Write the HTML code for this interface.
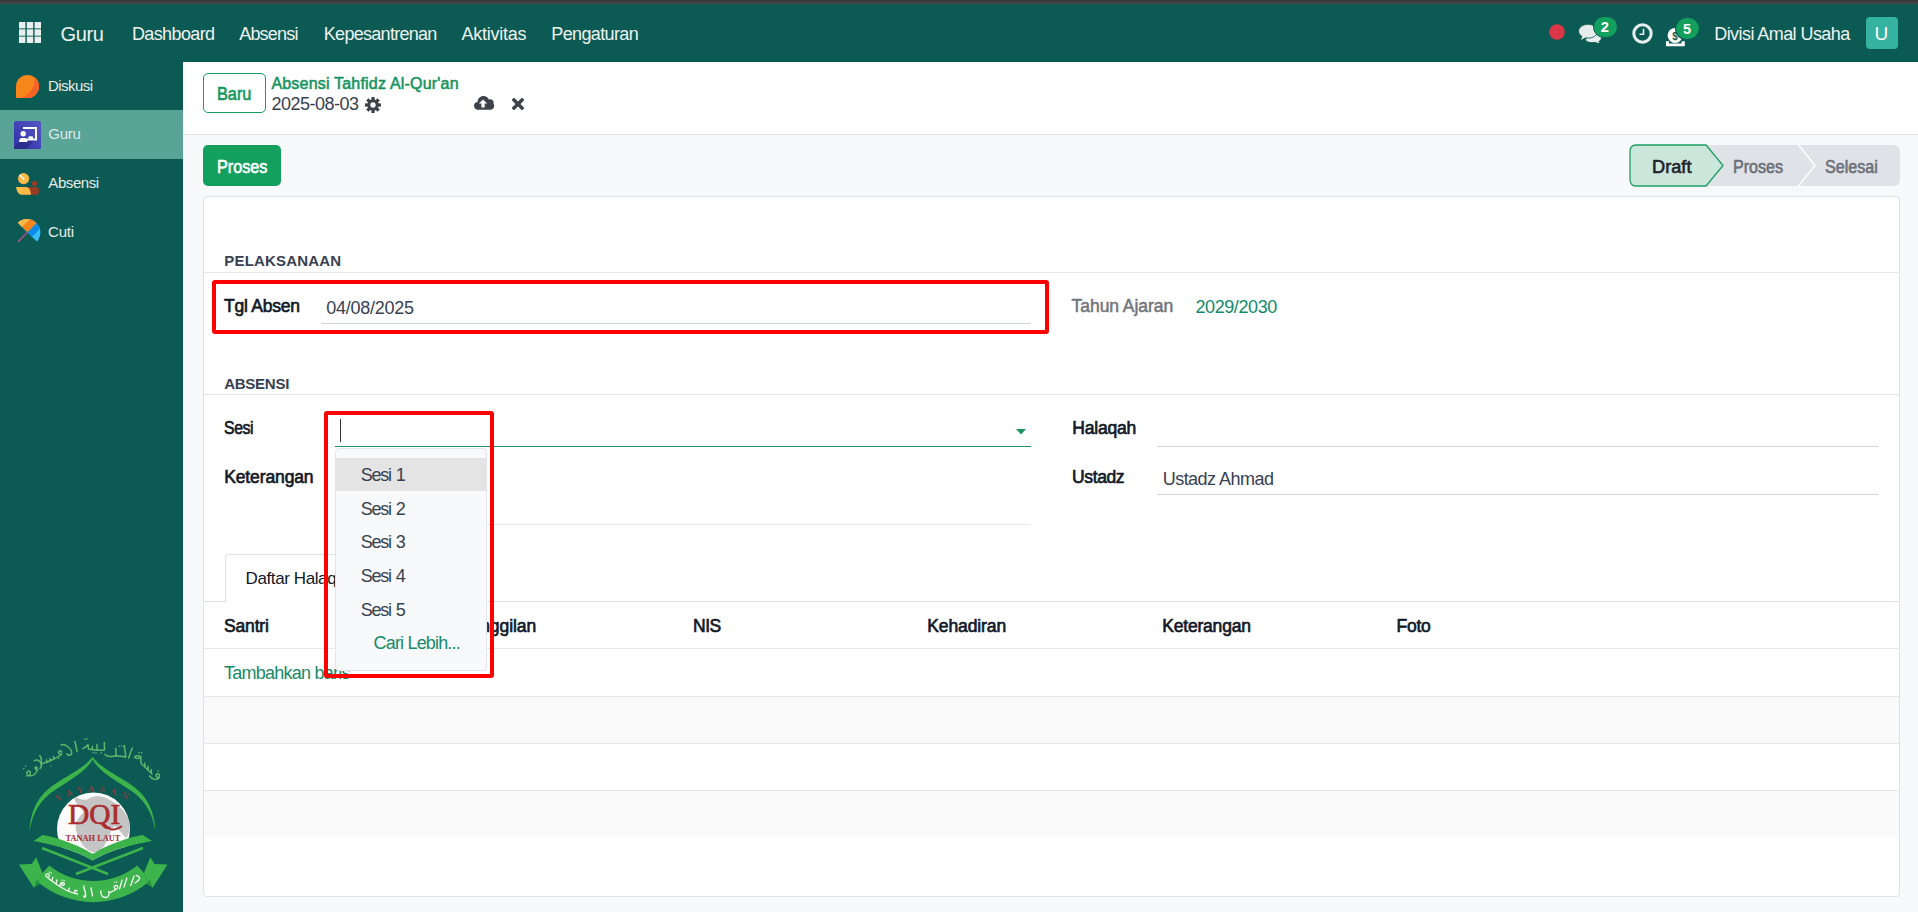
<!DOCTYPE html>
<html><head><meta charset="utf-8">
<style>
*{box-sizing:border-box;margin:0;padding:0}
html,body{width:1918px;height:912px;overflow:hidden;background:#f8f9fa;font-family:"Liberation Sans",sans-serif;position:relative}
.a{position:absolute}
.t{position:absolute;white-space:nowrap;line-height:1}
.b{font-weight:bold}
#strip{left:0;top:0;width:1918px;height:4px;background:linear-gradient(#3b3b3b 0,#3b3b3b 2px,#474646 2px,#474646 4px)}
#nav{left:0;top:4px;width:1918px;height:58px;background:#0c5a54}
#side{left:0;top:62px;width:183px;height:850px;background:#0c5a54}
#act{left:0;top:110px;width:183px;height:49px;background:#5aa397}
.nv{color:#eef2f1;font-size:18px}
.sd{color:#e6ecea;font-size:15px}
#cp{left:183px;top:62px;width:1735px;height:73px;background:#fff;border-bottom:1px solid #dee2e6}
#sheet{left:203px;top:196px;width:1697px;height:701px;background:#fff;border:1px solid #dee2e6;border-radius:4px}
.hl{background:#e5e7eb;height:1px}
.ul{background:#d1d5db;height:1px}
.lbl{color:#111827;font-size:17.5px;-webkit-text-stroke:0.65px #111827}
.val{color:#374151;font-size:18px}
.red{border:4px solid #ff0000;border-radius:3px}
</style></head><body>
<div id="strip" class="a"></div>
<div id="nav" class="a"></div>
<div id="side" class="a"></div>
<div id="act" class="a"></div>
<div id="cp" class="a"></div>

<!-- navbar -->
<svg class="a" style="left:19px;top:22px" width="22" height="21" viewBox="0 0 22 21">
<g fill="#e9efee"><rect x="0" y="0" width="6.4" height="6.4"/><rect x="7.8" y="0" width="6.4" height="6.4"/><rect x="15.6" y="0" width="6.4" height="6.4"/><rect x="0" y="7.3" width="6.4" height="6.4"/><rect x="7.8" y="7.3" width="6.4" height="6.4"/><rect x="15.6" y="7.3" width="6.4" height="6.4"/><rect x="0" y="14.6" width="6.4" height="6.4"/><rect x="7.8" y="14.6" width="6.4" height="6.4"/><rect x="15.6" y="14.6" width="6.4" height="6.4"/></g></svg>
<div class="t nv" style="left:60.6px;top:23.7px;font-size:20px;letter-spacing:-0.37px">Guru</div>
<div class="t nv" style="left:132px;top:24.8px;letter-spacing:-0.63px">Dashboard</div>
<div class="t nv" style="left:239.2px;top:24.8px;letter-spacing:-0.8px">Absensi</div>
<div class="t nv" style="left:323.8px;top:24.8px;letter-spacing:-0.71px">Kepesantrenan</div>
<div class="t nv" style="left:461.5px;top:24.8px;letter-spacing:-0.24px">Aktivitas</div>
<div class="t nv" style="left:551.3px;top:24.8px;letter-spacing:-0.63px">Pengaturan</div>
<div class="t nv" style="left:1714.2px;top:24.5px;letter-spacing:-0.56px">Divisi Amal Usaha</div>

<!-- sidebar -->
<div class="t sd" style="left:48px;top:78.3px;letter-spacing:-0.56px">Diskusi</div>
<div class="t sd" style="left:48.3px;top:125.8px;letter-spacing:-0.26px;color:#dfe9e6">Guru</div>
<div class="t sd" style="left:48.3px;top:175.3px;letter-spacing:-0.42px">Absensi</div>
<div class="t sd" style="left:48px;top:224.3px;letter-spacing:-0.17px">Cuti</div>


<!-- sidebar icons -->
<svg class="a" style="left:16px;top:75px" width="23" height="23" viewBox="0 0 23 23">
<defs><clipPath id="dk"><path d="M0,23 V11.5 A11.5,11.5 0 1 1 11.5,23 Z"/></clipPath></defs>
<g clip-path="url(#dk)"><rect width="23" height="23" fill="#f7871b"/>
<path d="M18.5,2 Q20,17 4,23.5 L24,24 L24,0 Z" fill="#f76228"/></g>
</svg>
<svg class="a" style="left:14px;top:121px" width="27" height="28" viewBox="0 0 27 28">
<defs><linearGradient id="gg" x1="0" y1="1" x2="1" y2="0"><stop offset="0" stop-color="#3230a8"/><stop offset="1" stop-color="#5359c4"/></linearGradient>
<clipPath id="gc"><rect width="27" height="28" rx="1.5"/></clipPath></defs>
<g clip-path="url(#gc)">
<rect width="27" height="28" fill="url(#gg)"/>
<path d="M4,22 L9,17 L22,17.5 L12,28 L0,28 L0,26 Z" fill="#2a2a86" opacity="0.75"/>
<path d="M9,7 H22 V18.5 H12" fill="none" stroke="#fff" stroke-width="1.9"/>
<rect x="14.5" y="15.3" width="4.5" height="3" rx="1" fill="#fff"/>
<circle cx="9.2" cy="12.8" r="2.7" fill="#fff"/>
<path d="M5,21 Q5,17 8,17 H10.5 Q13.5,17 13.5,21 Z" fill="#fff"/>
</g></svg>
<svg class="a" style="left:15px;top:172px" width="25" height="24" viewBox="0 0 25 24">
<circle cx="8.6" cy="6.6" r="5.6" fill="#fbb945"/>
<path d="M5,3.3 L8.8,7.2" stroke="#fff" stroke-width="1.4" stroke-linecap="round"/>
<circle cx="19.5" cy="11.4" r="2.6" fill="#983d23"/>
<path d="M12,15.1 H21.3 Q24,15.1 24,18.9 Q24,22.8 21.3,22.8 H12 Z" fill="#983d23"/>
<path d="M1,15.1 H11.5 Q15.5,15.5 16,22.8 H6 Q2,22 1,15.1 Z" fill="#fbb945"/>
</svg>
<svg class="a" style="left:14px;top:216px" width="30" height="30" viewBox="0 0 30 30">
<defs><clipPath id="um"><path d="M3.9,6.7 L22.8,25.4 A13.3,13.3 0 0 0 3.9,6.7 Z"/></clipPath></defs>
<g clip-path="url(#um)" transform="translate(0,0)">
<g transform="rotate(-45 13.4 16.3)">
<rect x="-20" y="-10" width="70" height="50" fill="#35bdfc"/>
<rect x="-20" y="-10" width="70" height="32.7" fill="#0a8cef"/>
<rect x="-20" y="-10" width="70" height="26.3" fill="#f7871b"/>
<rect x="-20" y="-10" width="70" height="18.7" fill="#fbb945"/>
</g></g>
<path d="M13.4,16.3 L4.5,25.4" stroke="#a4508e" stroke-width="1.6" stroke-linecap="round"/>
</svg>

<!-- navbar right icons -->
<svg class="a" style="left:1549px;top:23.5px" width="16" height="16" viewBox="0 0 16 16"><circle cx="8" cy="8" r="7.8" fill="#dc3545"/></svg>
<svg class="a" style="left:1576.5px;top:22.6px" width="27.5" height="22.2" viewBox="0 0 26 21">
<path d="M12,10 C20,8 24,11 23.5,14 C23,16.5 21.5,17 21,17.5 L23,20 L16.5,18.5 C13,19 9,18 7.5,16 Z" fill="#e6eceb" stroke="#0c5a54" stroke-width="1"/>
<path d="M10.5,1.3 C15.5,1.3 19.5,4.2 19.5,7.8 C19.5,11.4 15.5,14.3 10.5,14.3 C9.6,14.3 8.8,14.2 8,14.1 L3,16.8 L4.6,12.6 C2.6,11.4 1.5,9.7 1.5,7.8 C1.5,4.2 5.5,1.3 10.5,1.3 Z" fill="#e6eceb" stroke="#0c5a54" stroke-width="0.8"/>
</svg>
<svg class="a" style="left:1593px;top:16px" width="25" height="22" viewBox="0 0 25 22"><rect x="0.5" y="0.5" width="24" height="21" rx="10.5" fill="#13a05f" stroke="#0c5a54" stroke-width="1"/></svg>
<div class="t b" style="left:1600.8px;top:19.6px;font-size:14.6px;color:#fff">2</div>
<svg class="a" style="left:1632px;top:22.5px" width="21" height="21" viewBox="0 0 21 21">
<circle cx="10.5" cy="10.5" r="8.7" fill="none" stroke="#e8eeed" stroke-width="3"/>
<path d="M11.5,5.8 V11.3 H7.5" fill="none" stroke="#e8eeed" stroke-width="1.6"/>
</svg>
<svg class="a" style="left:1665px;top:27px" width="22" height="20" viewBox="0 0 22 20">
<circle cx="10.1" cy="8.4" r="7.5" fill="#fff"/>
<text x="10.1" y="12.6" text-anchor="middle" font-family="Liberation Sans" font-size="10" font-weight="bold" fill="#0c5a54">$</text>
<path d="M1,14.2 H4 V16.4 H16.6 V14.2 H19.8 V19.3 H1 Z" fill="#fff"/>
</svg>
<svg class="a" style="left:1675px;top:17px" width="25" height="24" viewBox="0 0 25 24"><rect x="0.5" y="0.5" width="24" height="22" rx="11" fill="#13a05f" stroke="#0c5a54" stroke-width="1.2"/></svg>
<div class="t b" style="left:1682.9px;top:21.8px;font-size:14.4px;color:#fff">5</div>
<div class="a" style="left:1866px;top:17px;width:32px;height:32px;background:#35b3a0;border-radius:4px"></div>
<div class="t" style="left:1874.5px;top:23.5px;font-size:19px;color:#fff">U</div>

<!-- control panel icons -->
<svg class="a" style="left:365px;top:97px" width="16" height="16" viewBox="-8 -8 16 16">
<g fill="#3d434b">
<rect x="-1.6" y="-8" width="3.2" height="16"/>
<rect x="-1.6" y="-8" width="3.2" height="16" transform="rotate(45)"/>
<rect x="-1.6" y="-8" width="3.2" height="16" transform="rotate(90)"/>
<rect x="-1.6" y="-8" width="3.2" height="16" transform="rotate(135)"/>
<circle r="5.8"/></g>
<circle r="2.7" fill="#fff"/>
</svg>
<svg class="a" style="left:473px;top:95px" width="22" height="16" viewBox="0 0 22 16">
<path d="M5,14.7 C2.3,14.7 1,12.7 1,10.7 C1,8.5 2.7,7 4.6,7 C4.6,3.5 7.3,1 10.5,1 C13,1 15,2.5 15.8,4.5 C16.2,4.3 16.8,4.2 17.3,4.2 C19.2,4.2 20.6,5.8 20.6,7.6 C20.6,7.9 20.5,8.2 20.5,8.5 C21,9.3 21.2,10.2 21.2,11 C21.2,13 19.6,14.7 17.4,14.7 Z" fill="#3d434b"/>
<path d="M10,4.4 L14.2,8.6 H11.7 V12.6 H8.4 V8.6 H5.9 Z" fill="#fff"/>
</svg>
<svg class="a" style="left:512px;top:98px" width="12" height="12" viewBox="0 0 12 12">
<path d="M0.8,0.8 L11.2,11.2 M11.2,0.8 L0.8,11.2" stroke="#3d434b" stroke-width="3.5" stroke-linecap="butt"/>
</svg>


<!-- logo -->
<svg class="a" style="left:0;top:720px" width="183" height="192" viewBox="0 720 183 192">
<g fill="none" stroke="#5cb96b" stroke-width="1.5" stroke-linecap="round" stroke-linejoin="round">
<path d="M27,776 C26,772 28,770 30,771.5 C31,773.5 30,775.5 27,776 M29,775.5 C32,776.5 35,774.5 37,771 C38,769 37,766.5 35.5,767 C34.5,768 35.5,770 37.5,770"/>
<path d="M34.5,760.8 C36.5,759.2 38.5,760 40.3,762 C41.8,764.5 41.5,767 40,768.5 M39.9,755.7 C41.5,758 41.8,760 41.2,762"/>
<path d="M41,764 C46,762.5 50,761 53,759.5 C56,758 58.5,756.5 61.5,754.5 M47,762.5 L46.5,760 M50.5,761 L50,758.5 M54,759 L53.5,756.5"/>
<path d="M61.5,754.5 C58.5,754 57.5,752 59.5,751 C61,750.5 62,751.5 61.5,752.5"/>
<path d="M61,745 C63,744 65.5,745 67.5,746.5 C70.5,748.5 72.5,752 71.5,754 C70,756 67,755.5 67,753.5 M75,741.5 L77,751.5"/>
<path d="M83,748.8 C85,747.5 87,746.5 88,744.5 L88.5,749 C93,750 99,750.5 104.5,750 M92.5,749.5 L92.3,746.5 M97,750.2 L97,744.5 M104.5,750 L104.3,742.5"/>
<path d="M105,754.5 C107,756.8 110,756.8 113,756.2 C117,755.6 121,756 125.8,756.9 M115.8,748.6 L116,755.7 M124.3,745.6 L125.8,756.9 M132.3,748 L128.6,758"/>
<path d="M134.5,757 C136,755.3 139,755.3 140.8,756.6 C139.7,758.7 136.5,759.2 134.5,757 M140.8,756.6 C141,759 140.5,762 141.5,764 C144.5,766.5 148,770 152,774 M145,766.5 L144.6,763.2 M148.3,769.2 L148.1,766.2 M151.3,772.6 L151.2,769.6"/>
<path d="M149.5,776 C152,779 156,780.5 158.5,778.5 C160.5,776.5 159.5,773.5 157.2,773.8 C155.5,774.3 155.8,777 158.5,778.5"/>
</g>
<g fill="#5cb96b"><circle cx="23.8" cy="768.6" r="0.8"/><circle cx="25.6" cy="766.2" r="0.8"/><circle cx="84.8" cy="739.3" r="0.8"/><circle cx="86.8" cy="738.9" r="0.8"/>
<circle cx="93.3" cy="752.8" r="0.8"/><circle cx="96" cy="752.9" r="0.8"/><circle cx="101" cy="753.1" r="0.8"/><circle cx="58.8" cy="758.4" r="0.8"/>
<circle cx="119.3" cy="746.2" r="0.8"/><circle cx="121.7" cy="746" r="0.8"/><circle cx="124" cy="746.3" r="0.8"/><circle cx="139" cy="752.6" r="0.8"/><circle cx="141.6" cy="752.9" r="0.8"/><circle cx="158.2" cy="771" r="0.8"/><circle cx="51" cy="766" r="0.7"/></g>
<path d="M92.4,757 C86,766 74,772 58,782 C42,792 31,805 29.5,831 C33,812 40,800 55,790 C72,779 86,771 92.6,759.5 C99,771 113,779 130,790 C145,800 152,812 155.5,831 C154,805 143,792 127,782 C111,772 99,766 92.6,757 Z" fill="#3cb44b"/>
<defs><clipPath id="globe"><circle cx="93.5" cy="829" r="36.5"/></clipPath><clipPath id="gtop"><path d="M0,720 H183 V841 L152,841 C130,845 105,852 92.7,860.5 C80,852 55,845 33.4,841 L0,841 Z"/></clipPath>
<path id="yarc" d="M54,804 A71.6,71.6 0 0 1 134,804"/></defs>
<g clip-path="url(#gtop)"><circle cx="93.5" cy="829" r="36.5" fill="#fbfbfb"/>
<g clip-path="url(#globe)" fill="#c4c4c4">
<path d="M74,796 C80,800 86,801 90,798 C96,795 104,796 110,800 C118,804 124,810 128,818 C131,826 130,834 126,838 C122,834 118,828 114,826 C110,832 108,840 104,846 C100,852 94,854 88,850 C82,846 78,838 76,830 C74,822 80,816 84,812 C80,808 74,802 74,796 Z"/>
<path d="M92,852 C98,856 104,858 110,856 C106,862 96,862 92,852 Z"/>
</g></g>
<text font-family="Liberation Serif" font-size="9" fill="#b03032" letter-spacing="5.2"><textPath href="#yarc" startOffset="4">YAYASAN</textPath></text>
<text x="68" y="824.2" font-family="Liberation Serif" font-size="29" fill="#ab2b2f" stroke="#ab2b2f" stroke-width="0.7" textLength="52.3" lengthAdjust="spacingAndGlyphs">DQI</text>
<path d="M103,823 C108,830 114,832 122,826" fill="none" stroke="#ab2b2f" stroke-width="2"/>
<text x="65.6" y="841" font-family="Liberation Serif" font-size="8.6" font-weight="bold" fill="#ab2b2f" textLength="54.7" lengthAdjust="spacingAndGlyphs">TANAH LAUT</text>
<path d="M42,848 L108,874 M143,848 L76,874" stroke="#3cb44b" stroke-width="2.6"/>
<path d="M33.4,841 L42.6,835 C60,838 80,846 92.7,854 C105,846 125,838 142.8,835 L152,841 C130,845 105,852 92.7,860.5 C80,852 55,845 33.4,841 Z" fill="#3cb44b"/>
<path d="M18.9,864.4 L31.8,864.1 L36.1,857.2 L42.5,873 L38.5,882.5 L33.8,887.8 Z" fill="#3cb44b"/>
<path d="M36.3,879.8 L40.5,883.2 L34.5,887.2 Z" fill="#23933b"/>
<path d="M167.5,864.4 L154.6,864.1 L150.3,857.2 L143.9,873 L147.9,882.5 L152.6,887.8 Z" fill="#3cb44b"/>
<path d="M150.1,879.8 L145.9,883.2 L151.9,887.2 Z" fill="#23933b"/>
<path d="M49.2,865.4 A69.8,69.8 0 0 0 137.2,865.4 L143.9,873 L147.9,882.5 A85.9,85.9 0 0 1 38.5,882.5 L42.5,873 Z" fill="#3cb44b"/>
<g fill="none" stroke="#f2f8f2" stroke-width="1.35" stroke-linecap="round" stroke-linejoin="round">
<path d="M46,876.5 C45,874.5 47,873 49,874.5 C50,876 49,878 46,876.5 M48,878 C53,882 60,887 66,890 C70,892 74,893.5 77.5,894 C75,893.5 73.5,892 75,890.5 C76,890 77,890.5 76.8,891.2"/>
<path d="M52,880.6 L52.8,877.3 M56,883.5 L57,880 M60,886 L61,882.8 M68.5,891 L69.2,888.2 M63,885.6 C61.3,885.3 61.3,882.6 63,882.5 C64.6,882.6 64.8,885.2 63,885.6"/>
<path d="M83.5,887 C85,890 86,893 85.5,896.5 C85,897.8 83.5,897.5 84,896 M91,888 L92.5,895.8"/>
<path d="M100.8,891 C100.5,895.5 103,897.8 106,897.5 C109,897 109.5,894 108.8,891.5 M108.8,893 C111,892 113.5,891 116,889.5 C113.5,888.5 113.5,885.5 116,885.3 C118,885.3 118.5,888 116,889.5 M119.5,889 L122,880.2 M124,887 L126.8,878.2 M130.6,885.5 L134,876.2 M135,883 C137,882 139,880.5 139.8,878 C138.8,876.5 137.5,875.6 136.2,875.5"/>
</g>
<g fill="#f2f8f2"><circle cx="49.5" cy="872.3" r="0.75"/><circle cx="51.2" cy="873.1" r="0.75"/><circle cx="62" cy="880.2" r="0.7"/><circle cx="64.2" cy="880.6" r="0.7"/><circle cx="84" cy="886" r="0.8"/><circle cx="114.5" cy="882.4" r="0.7"/><circle cx="116.7" cy="882" r="0.7"/></g>
</svg>

<!-- control panel -->
<div class="a" style="left:203px;top:73px;width:63px;height:40px;border:1px solid #16a05f;border-radius:5px;background:#fff"></div>
<div class="t" style="left:217.1px;top:86.2px;font-size:17.5px;-webkit-text-stroke:0.6px #13985c;transform:scaleX(0.93);transform-origin:0 0;color:#13985c">Baru</div>
<div class="t" style="left:271.4px;top:75.9px;font-size:16px;-webkit-text-stroke:0.55px #15945e;letter-spacing:0.2px;color:#15945e">Absensi Tahfidz Al-Qur'an</div>
<div class="t" style="left:271.5px;top:94.5px;font-size:18px;letter-spacing:-0.5px;color:#374151">2025-08-03</div>

<div class="a" style="left:203px;top:145px;width:78px;height:41px;background:#13a05f;border-radius:5px"></div>
<div class="t" style="left:216.6px;top:159.2px;font-size:17.5px;-webkit-text-stroke:0.6px #fff;transform:scaleX(0.925);transform-origin:0 0;color:#fff">Proses</div>

<!-- sheet -->
<div id="sheet" class="a"></div>

<!-- statusbar -->
<svg class="a" style="left:1629px;top:144px" width="272" height="43" viewBox="0 0 272 43">
<path d="M7,1 H264 Q271,1 271,8 V35 Q271,42 264,42 H7 Q1,42 1,35 V8 Q1,1 7,1 Z" fill="#dfe2e6"/>
<path d="M169.5,1 L186,21.5 L169.5,42" fill="none" stroke="#fff" stroke-width="1.6"/>
<path d="M7,1 H77 L94,21.5 L77,42 H7 Q1,42 1,35 V8 Q1,1 7,1 Z" fill="#cbe7dc" stroke="#1f9e63" stroke-width="1.3"/>
</svg>
<div class="t" style="left:1651.9px;top:159.0px;font-size:17.5px;-webkit-text-stroke:0.6px #1f2328;transform:scaleX(1.04);transform-origin:0 0;color:#1f2328">Draft</div>
<div class="t" style="left:1733.4px;top:159.0px;font-size:17.5px;-webkit-text-stroke:0.6px #6b7079;transform:scaleX(0.92);transform-origin:0 0;color:#6b7079">Proses</div>
<div class="t" style="left:1825.4px;top:159.0px;font-size:17.5px;-webkit-text-stroke:0.6px #6b7079;transform:scaleX(0.92);transform-origin:0 0;color:#6b7079">Selesai</div>

<!-- sheet content -->
<div class="t b" style="left:224.3px;top:253.1px;font-size:15px;letter-spacing:0.19px;color:#374151">PELAKSANAAN</div>
<div class="a hl" style="left:204px;top:272px;width:1695px"></div>
<div class="t lbl" style="left:224px;top:298.0px;letter-spacing:-0.24px">Tgl Absen</div>
<div class="t val" style="left:326.3px;top:298.7px;letter-spacing:-0.27px">04/08/2025</div>
<div class="a ul" style="left:321px;top:323px;width:710px"></div>
<div class="t" style="left:1071.6px;top:298.1px;font-size:17.5px;-webkit-text-stroke:0.5px #71757b;letter-spacing:-0.05px;color:#71757b">Tahun Ajaran</div>
<div class="t" style="left:1195.5px;top:297.9px;font-size:18px;letter-spacing:-0.42px;color:#108a6c">2029/2030</div>

<div class="t b" style="left:224.2px;top:376.2px;font-size:15px;letter-spacing:-0.26px;color:#374151">ABSENSI</div>
<div class="a hl" style="left:204px;top:394px;width:1695px"></div>
<div class="t lbl" style="left:224px;top:419.6px;letter-spacing:-0.4px;transform:scaleX(0.9);transform-origin:0 0">Sesi</div>
<div class="a" style="left:335px;top:446px;width:696px;height:1px;background:#1e9561"></div>
<div class="a" style="left:340px;top:419px;width:1px;height:23px;background:#333"></div>
<svg class="a" style="left:1016px;top:429px" width="10" height="6" viewBox="0 0 10 6"><path d="M0,0 H10 L5,5.5 Z" fill="#1e9561"/></svg>
<div class="t lbl" style="left:1072.3px;top:419.8px;letter-spacing:-0.22px">Halaqah</div>
<div class="a ul" style="left:1157px;top:446px;width:722px"></div>
<div class="t lbl" style="left:224.2px;top:468.8px;letter-spacing:-0.12px">Keterangan</div>
<div class="a hl" style="left:335px;top:524px;width:696px"></div>
<div class="t lbl" style="left:1072px;top:468.8px;letter-spacing:-0.37px">Ustadz</div>
<div class="t val" style="left:1162.7px;top:469.7px;letter-spacing:-0.53px">Ustadz Ahmad</div>
<div class="a ul" style="left:1157px;top:494px;width:722px"></div>

<!-- tabs -->
<div class="a" style="left:225px;top:554px;width:170px;height:48px;background:#fff;border:1px solid #dee2e6;border-bottom:none;border-radius:4px 4px 0 0"></div>
<div class="a hl" style="left:204px;top:601px;width:21px;background:#dee2e6"></div>
<div class="a hl" style="left:395px;top:601px;width:1504px;background:#dee2e6"></div>
<div class="t" style="left:245.6px;top:570.3px;font-size:17px;letter-spacing:-0.4px;color:#111827">Daftar Halaqah</div>

<!-- table -->
<div class="t lbl" style="left:224px;top:617.9px;letter-spacing:-0.16px">Santri</div>
<div class="t lbl" style="left:459px;top:617.9px;letter-spacing:-0.09px">Panggilan</div>
<div class="t lbl" style="left:693px;top:617.9px;letter-spacing:-0.5px">NIS</div>
<div class="t lbl" style="left:927.2px;top:617.9px;letter-spacing:-0.10px">Kehadiran</div>
<div class="t lbl" style="left:1162.2px;top:617.9px;letter-spacing:-0.19px">Keterangan</div>
<div class="t lbl" style="left:1396.6px;top:617.9px;letter-spacing:-0.30px">Foto</div>
<div class="a hl" style="left:204px;top:648px;width:1695px"></div>
<div class="t" style="left:224px;top:663.6px;font-size:18px;letter-spacing:-0.75px;color:#178a67">Tambahkan baris</div>
<div class="a hl" style="left:204px;top:696px;width:1695px"></div>
<div class="a" style="left:204px;top:697px;width:1695px;height:46px;background:#fafafa"></div>
<div class="a hl" style="left:204px;top:743px;width:1695px"></div>
<div class="a hl" style="left:204px;top:790px;width:1695px"></div>
<div class="a" style="left:204px;top:791px;width:1695px;height:46px;background:#fafafa"></div>

<!-- dropdown -->
<div class="a" style="left:335px;top:448px;width:152px;height:223px;background:#f8f9fa;border:1px solid #e3e5e8;border-radius:4px"></div>
<div class="a" style="left:336px;top:458px;width:150px;height:33px;background:#e4e4e4"></div>
<div class="t" style="left:360.7px;top:465.8px;font-size:18px;letter-spacing:-1.2px;word-spacing:1px;color:#374151">Sesi 1</div>
<div class="t" style="left:360.7px;top:499.6px;font-size:18px;letter-spacing:-1.2px;word-spacing:1px;color:#374151">Sesi 2</div>
<div class="t" style="left:360.7px;top:533.4px;font-size:18px;letter-spacing:-1.2px;word-spacing:1px;color:#374151">Sesi 3</div>
<div class="t" style="left:360.7px;top:567.2px;font-size:18px;letter-spacing:-1.2px;word-spacing:1px;color:#374151">Sesi 4</div>
<div class="t" style="left:360.7px;top:601px;font-size:18px;letter-spacing:-1.2px;word-spacing:1px;color:#374151">Sesi 5</div>
<div class="t" style="left:373.6px;top:634.4px;font-size:18px;letter-spacing:-0.83px;color:#178a67">Cari Lebih...</div>

<!-- red boxes -->
<div class="a red" style="left:212px;top:280px;width:837px;height:54px"></div>
<div class="a red" style="left:324px;top:411px;width:170px;height:267px"></div>
</body></html>
